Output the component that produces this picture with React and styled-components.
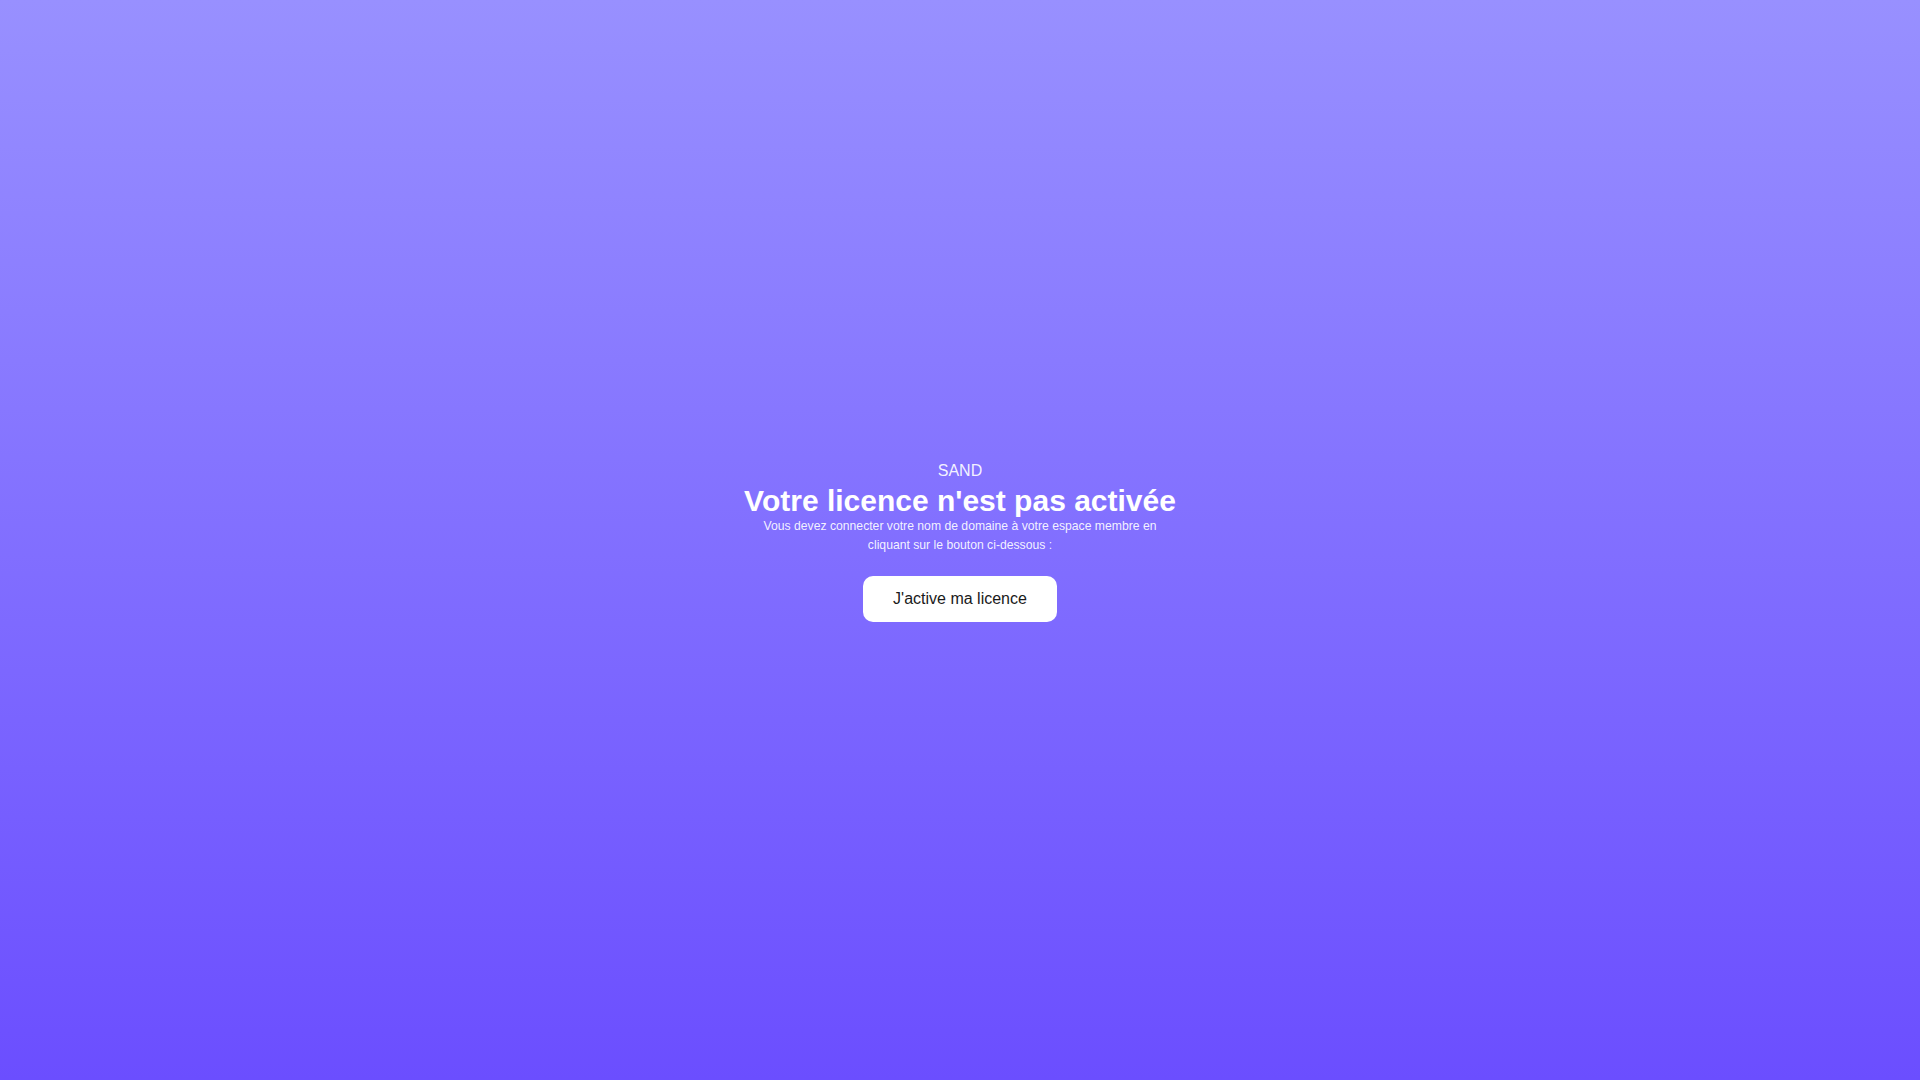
import React from "react";
import styled, { createGlobalStyle } from "styled-components";

const GlobalStyle = createGlobalStyle`
  html, body {
    margin: 0;
    padding: 0;
  }
  body {
    font-family: "Liberation Sans", Arial, sans-serif;
  }
`;

const Page = styled.div`
  box-sizing: border-box;
  min-height: 100vh;
  padding-top: 4px;
  display: flex;
  align-items: center;
  justify-content: center;
  background: linear-gradient(180deg, #9890ff 0%, #6b4eff 100%);
  color: #fff;
`;

const Content = styled.div`
  display: flex;
  flex-direction: column;
  align-items: center;
  text-align: center;
  max-width: 420px;
`;

const Brand = styled.div`
  font-size: 16px;
  line-height: 18px;
  color: rgba(255, 255, 255, 0.92);
`;

const Title = styled.h1`
  margin: 4px 0 0;
  font-size: 30px;
  line-height: 34px;
  font-weight: 700;
  white-space: nowrap;
`;

const Text = styled.p`
  margin: -1px 0 0;
  font-size: 12.2px;
  line-height: 19px;
  max-width: 400px;
  color: rgba(255, 255, 255, 0.92);
`;

const Button = styled.button`
  margin-top: 21px;
  padding: 0 30px;
  height: 46px;
  border: none;
  border-radius: 10px;
  background: #fff;
  color: #1a1a1a;
  font-family: inherit;
  font-size: 16px;
  cursor: pointer;
`;

export default function App() {
  return (
    <>
      <GlobalStyle />
      <Page>
        <Content>
          <Brand>SAND</Brand>
          <Title>Votre licence n'est pas activée</Title>
          <Text>
            Vous devez connecter votre nom de domaine à votre espace membre en
            cliquant sur le bouton ci-dessous :
          </Text>
          <Button>J'active ma licence</Button>
        </Content>
      </Page>
    </>
  );
}
